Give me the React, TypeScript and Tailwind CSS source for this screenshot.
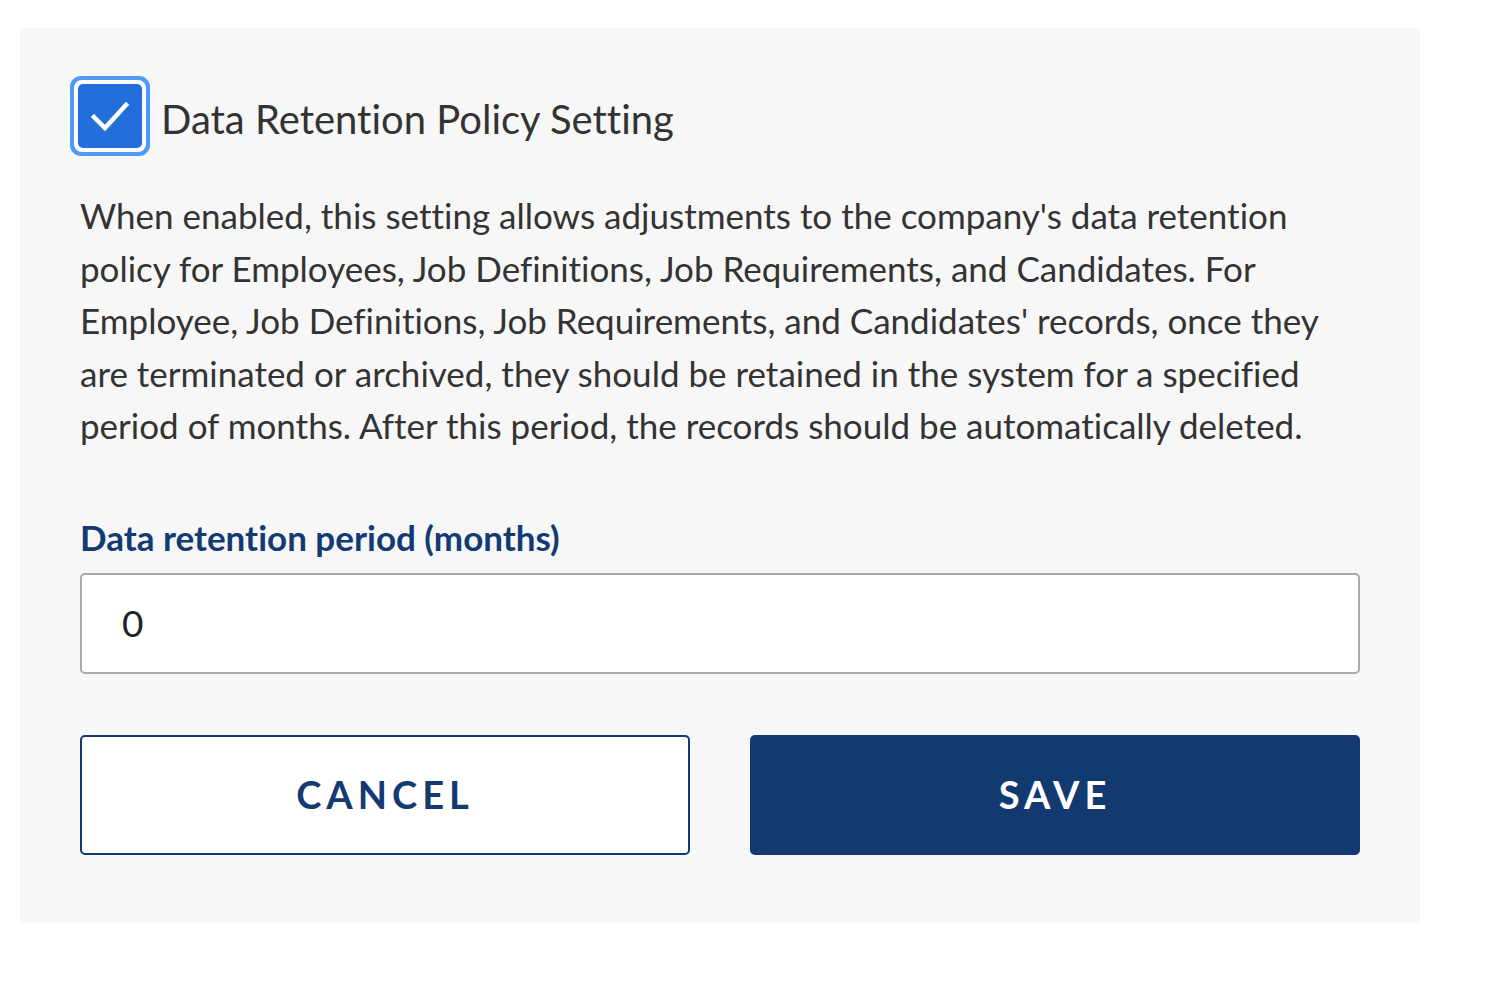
export default function App() {
  return (
    <div
      className="min-h-screen bg-white pt-[28px] pl-[20px] [font-variant-ligatures:none]"
      style={{ fontFamily: "Lato, 'Noto Sans', sans-serif" }}
    >
      <div className="w-[1400px] h-[894px] bg-[#f7f7f7] pt-[48px] px-[60px]">
        <div className="flex items-center -ml-[10px]">
          <div className="w-[80px] h-[80px] rounded-[11px] bg-[#4d9bf8] p-[4px]">
            <div className="w-full h-full rounded-[8px] bg-white p-[4px]">
              <div className="w-full h-full rounded-[5px] bg-[#226fdb] flex items-center justify-center">
                <svg width="44" height="44" viewBox="0 0 44 44" fill="none">
                  <path d="M6 23 L17 34 L38 11" stroke="white" strokeWidth="4.5" strokeLinecap="square" />
                </svg>
              </div>
            </div>
          </div>
          <span className="ml-[11px] mt-[5px] text-[40px] text-[#333333] leading-none">
            Data Retention Policy Setting
          </span>
        </div>

        <p className="mt-[33px] text-[35px] leading-[52.5px] text-[#333333]">
          When enabled, this setting allows adjustments to the company's data retention policy for Employees, Job
          Definitions, Job Requirements, and Candidates. For Employee, Job Definitions, Job Requirements, and
          Candidates' records, once they are terminated or archived, they should be retained in the system for a
          specified period of months. After this period, the records should be automatically deleted.
        </p>

        <label className="block mt-[65px] text-[35px] font-bold text-[#133a72] leading-[40px]">
          Data retention period (months)
        </label>
        <div className="mt-[16px] h-[101px] rounded-[5px] border-2 border-[#aaaaaa] bg-white flex items-center pl-[40px] text-[37px] text-[#222222]">
          0
        </div>

        <div className="mt-[61px] grid grid-cols-2 gap-[60px]">
          <button className="h-[120px] rounded-[5px] border-2 border-[#133a72] bg-white text-[#133a72] text-[38px] font-bold tracking-[5px]">
            CANCEL
          </button>
          <button className="h-[120px] rounded-[5px] bg-[#123a70] text-white text-[38px] font-bold tracking-[5px]">
            SAVE
          </button>
        </div>
      </div>
    </div>
  );
}
